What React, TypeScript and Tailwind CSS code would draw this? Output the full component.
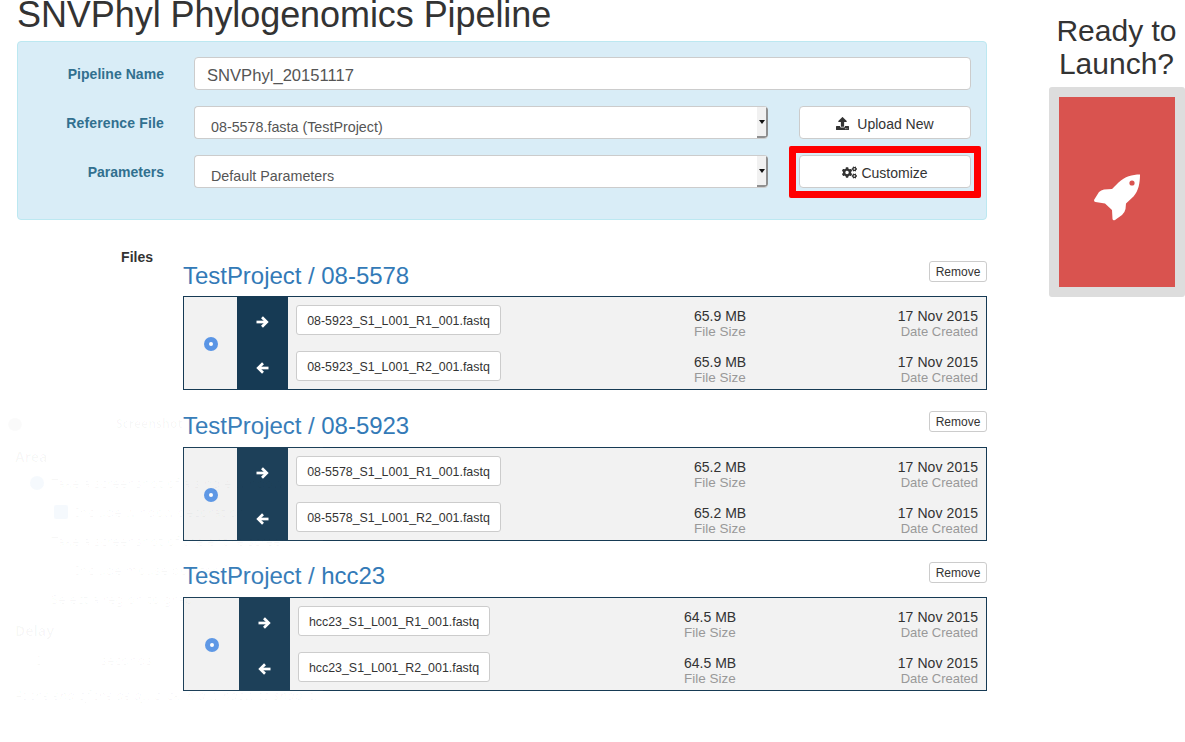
import React from 'react';
import { FaCogs, FaUpload } from 'react-icons/fa';

type FileRow = { name: string; size: string };

type SampleProps = {
  title: string;
  files: FileRow[];
  radioWidth: string;
  inputWidth: string;
  sizeMargin: string;
  className: string;
  headerClass: string;
  removeClass?: string;
};

function ArrowIcon({ left }: { left?: boolean }) {
  return (
    <svg viewBox="0 0 13 12" className={`h-[12px] w-[13px] ${left ? 'rotate-180' : ''}`} fill="none" stroke="currentColor" strokeWidth="2.7">
      <path d="M0.5 6H10" />
      <path d="M6 1.2L10.8 6L6 10.8" />
    </svg>
  );
}

function RocketIcon() {
  return (
    <svg viewBox="8 9 48 47" className="mt-[10px] h-[47px] w-[48px]">
      <path
        fill="#fff"
        d="M55 9.5C47 9.5 40 11.5 33.5 17.5L27 24L19 24.5Q16 25 14 27L9 35Q9 37 10.5 37L20 38.5L27 45L27.5 54Q28 56 30 55L37 50Q40 47 40.5 44L41 38.5L48.5 31.5C53.5 26 55 18 55 9.5Z"
      />
      <circle cx="47" cy="18" r="2.6" fill="#d9534f" />
    </svg>
  );
}

function Sample({ title, files, radioWidth, inputWidth, sizeMargin, className, headerClass, removeClass }: SampleProps) {
  return (
    <div className={className}>
      <div className={`flex justify-between ${headerClass}`}>
        <h3 className="text-[24px] leading-[30px] tracking-[-0.03px] text-[#337ab7]">{title}</h3>
        <button className={`h-[21px] w-[58px] rounded-[3px] border border-[#ccc] bg-white text-[12px] leading-[18px] text-[#333] ${removeClass ?? ''}`}>
          Remove
        </button>
      </div>
      <div className="flex h-[94px] border border-[#163a54] bg-[#f2f2f2]">
        <div className={`flex items-center justify-center pt-[2px] ${radioWidth}`}>
          <span className="flex h-[14px] w-[14px] items-center justify-center rounded-full bg-[#5a95e5]">
            <span className="h-[4px] w-[4px] rounded-full bg-white" />
          </span>
        </div>
        <div className="flex w-[51px] flex-col items-center gap-[34px] bg-[#163a54] pt-[19px] text-white">
          <ArrowIcon />
          <ArrowIcon left />
        </div>
        <div className="flex flex-1 flex-col gap-[16px] py-[8px] pl-[8px] pr-[8px]">
          {files.map((f) => (
            <div key={f.name} className="flex h-[30px] items-start">
              <div className={`flex h-[30px] items-center justify-center rounded-[3px] border border-[#ccc] bg-white pt-[2px] text-[12.4px] text-[#333] ${inputWidth}`}>
                {f.name}
              </div>
              <div className={`pt-[4px] text-[14px] leading-[15px] text-[#333] ${sizeMargin}`}>
                <div>{f.size}</div>
                <div className="text-[13.5px] text-[#999]">File Size</div>
              </div>
              <div className="ml-auto pt-[4px] text-right text-[14px] leading-[15px] text-[#333]">
                <div className="tracking-[0.08px]">17 Nov 2015</div>
                <div className="text-[13px] text-[#999]">Date Created</div>
              </div>
            </div>
          ))}
        </div>
      </div>
    </div>
  );
}

function SelectBox({ value }: { value: string }) {
  return (
    <div className="flex h-[33px] w-[574px] overflow-hidden rounded-[4px] border border-r-0 border-[#ccc] bg-white">
      <div className="flex-1 pl-[16px] pt-[11px] text-[14.3px] leading-[18px] text-[#555]">{value}</div>
      <div className="flex w-[11px] items-center justify-center rounded-br-[3px] border-b-2 border-r-2 border-[#8f8f8f] bg-[#f1f1f1]">
        <span className="h-0 w-0 border-x-[3px] border-t-[4px] border-x-transparent border-t-[#111]" />
      </div>
    </div>
  );
}

function GhostWindow() {
  return (
    <div className="pointer-events-none absolute left-0 top-[412px] h-[330px] w-[323px] rounded-t-[6px] bg-white/[0.03] font-['Noto_Sans',sans-serif] text-[13.4px] leading-[20px] text-black/[0.03]">
      <div className="flex items-center pl-[8px] pt-[2px] text-[12px] font-bold">
        <span className="h-[13px] w-[14px] rounded-full bg-black/[0.02]" />
        <span className="pl-[94px]">Screenshot</span>
      </div>
      <div className="pl-[15px] pt-[13px] text-[14px] font-bold">Area</div>
      <div className="flex items-center pl-[30px] pt-[6px]">
        <span className="mr-[7px] h-[14px] w-[14px] rounded-full bg-[#5a95e5]/[0.06]" />
        Take a screenshot of a single window
      </div>
      <div className="flex items-center pl-[54px] pt-[9px]">
        <span className="mr-[7px] h-[14px] w-[14px] rounded-[2px] bg-[#5a95e5]/[0.06]" />
        Include window decoration
      </div>
      <div className="pl-[51px] pt-[9px]">Take a screenshot of the entire screen</div>
      <div className="pl-[75px] pt-[9px]">Include mouse pointer</div>
      <div className="pl-[51px] pt-[9px]">Select a region to grab</div>
      <div className="pl-[15px] pt-[12px] text-[14px] font-bold">Delay</div>
      <div className="flex pl-[35px] pt-[9px]">
        <span>0</span>
        <span className="pl-[58px]">seconds</span>
      </div>
      <div className="whitespace-nowrap pl-[15px] pt-[15px] italic">At the end of the delay, click in a window to snap it.</div>
    </div>
  );
}

export default function App() {
  return (
    <div className="relative flex h-[742px] w-[1185px] overflow-hidden bg-white font-['Liberation_Sans',Arial,sans-serif] text-[#333]">
      <div className="w-[987px] pl-[17px]">
        <h1 className="h-[41px] text-[36px] leading-[29px] tracking-[-0.07px]">SNVPhyl Phylogenomics Pipeline</h1>

        {/* Settings panel */}
        <div className="relative flex h-[179px] flex-col gap-[16px] rounded-[4px] border border-[#bce8f1] bg-[#d9edf7] pt-[15px]">
          <div className="flex h-[33px]">
            <label className="w-[146px] text-right text-[14px] font-bold leading-[34px] tracking-[0.05px] text-[#31708f]">Pipeline Name</label>
            <div className="ml-[30px] h-[33px] w-[777px] rounded-[4px] border border-[#ccc] bg-white pl-[12px] text-[16.6px] leading-[36px] text-[#555]">
              SNVPhyl_20151117
            </div>
          </div>
          <div className="flex h-[33px]">
            <label className="w-[146px] text-right text-[14px] font-bold leading-[34px] tracking-[0.15px] text-[#31708f]">Reference File</label>
            <div className="ml-[30px]">
              <SelectBox value="08-5578.fasta (TestProject)" />
            </div>
            <button className="ml-[31px] flex h-[33px] w-[172px] items-center justify-center gap-[8px] rounded-[4px] border border-[#ccc] bg-white pt-[4px] text-[14px] text-[#333]">
              <FaUpload className="-mt-[2px] h-[13px] w-[13px]" />
              Upload New
            </button>
          </div>
          <div className="flex h-[33px]">
            <label className="w-[146px] text-right text-[14px] font-bold leading-[34px] text-[#31708f]">Parameters</label>
            <div className="ml-[30px]">
              <SelectBox value="Default Parameters" />
            </div>
            <button className="ml-[31px] flex h-[33px] w-[172px] items-center justify-center gap-[4px] rounded-[4px] border border-[#ccc] bg-white pt-[4px] text-[14px] text-[#333]">
              <FaCogs className="-mt-[2px] h-[15px] w-[15px]" />
              Customize
            </button>
          </div>
          {/* Annotation around Customize */}
          <div className="absolute left-[771px] top-[104px] h-[52px] w-[192px] rounded-[2px] border-[7px] border-[#ff0000]" />
        </div>

        {/* Files */}
        <div className="flex pt-[30px]">
          <div className="w-[136px] text-right text-[14px] font-bold leading-[15px]">Files</div>
          <div className="ml-[30px] w-[804px]">
            <Sample
              className="pt-[11px]"
              headerClass="h-[35px]"
              title="TestProject / 08-5578"
              radioWidth="w-[53px]"
              inputWidth="w-[205px]"
              sizeMargin="ml-[193px]"
              files={[
                { name: '08-5923_S1_L001_R1_001.fastq', size: '65.9 MB' },
                { name: '08-5923_S1_L001_R2_001.fastq', size: '65.9 MB' },
              ]}
            />
            <Sample
              className="pt-[21px]"
              headerClass="h-[36px]"
              title="TestProject / 08-5923"
              radioWidth="w-[53px]"
              inputWidth="w-[205px]"
              sizeMargin="ml-[193px]"
              files={[
                { name: '08-5578_S1_L001_R1_001.fastq', size: '65.2 MB' },
                { name: '08-5578_S1_L001_R2_001.fastq', size: '65.2 MB' },
              ]}
            />
            <Sample
              className="pt-[20px]"
              headerClass="h-[36px]"
              removeClass="mt-[1px]"
              title="TestProject / hcc23"
              radioWidth="w-[55px]"
              inputWidth="w-[192px]"
              sizeMargin="ml-[194px]"
              files={[
                { name: 'hcc23_S1_L001_R1_001.fastq', size: '64.5 MB' },
                { name: 'hcc23_S1_L001_R2_001.fastq', size: '64.5 MB' },
              ]}
            />
          </div>
        </div>
      </div>

      {/* Launch column */}
      <div className="ml-[62px] flex w-[136px] flex-col items-center pt-[14px]">
        <div className="-ml-[1px] text-center text-[30px] leading-[33px]">
          Ready to
          <br />
          Launch?
        </div>
        <div className="mt-[7px] flex h-[210px] w-[136px] items-center justify-center rounded-[3px] border-[10px] border-[#ddd] bg-[#d9534f] text-white">
          <RocketIcon />
        </div>
      </div>

      <GhostWindow />
    </div>
  );
}
